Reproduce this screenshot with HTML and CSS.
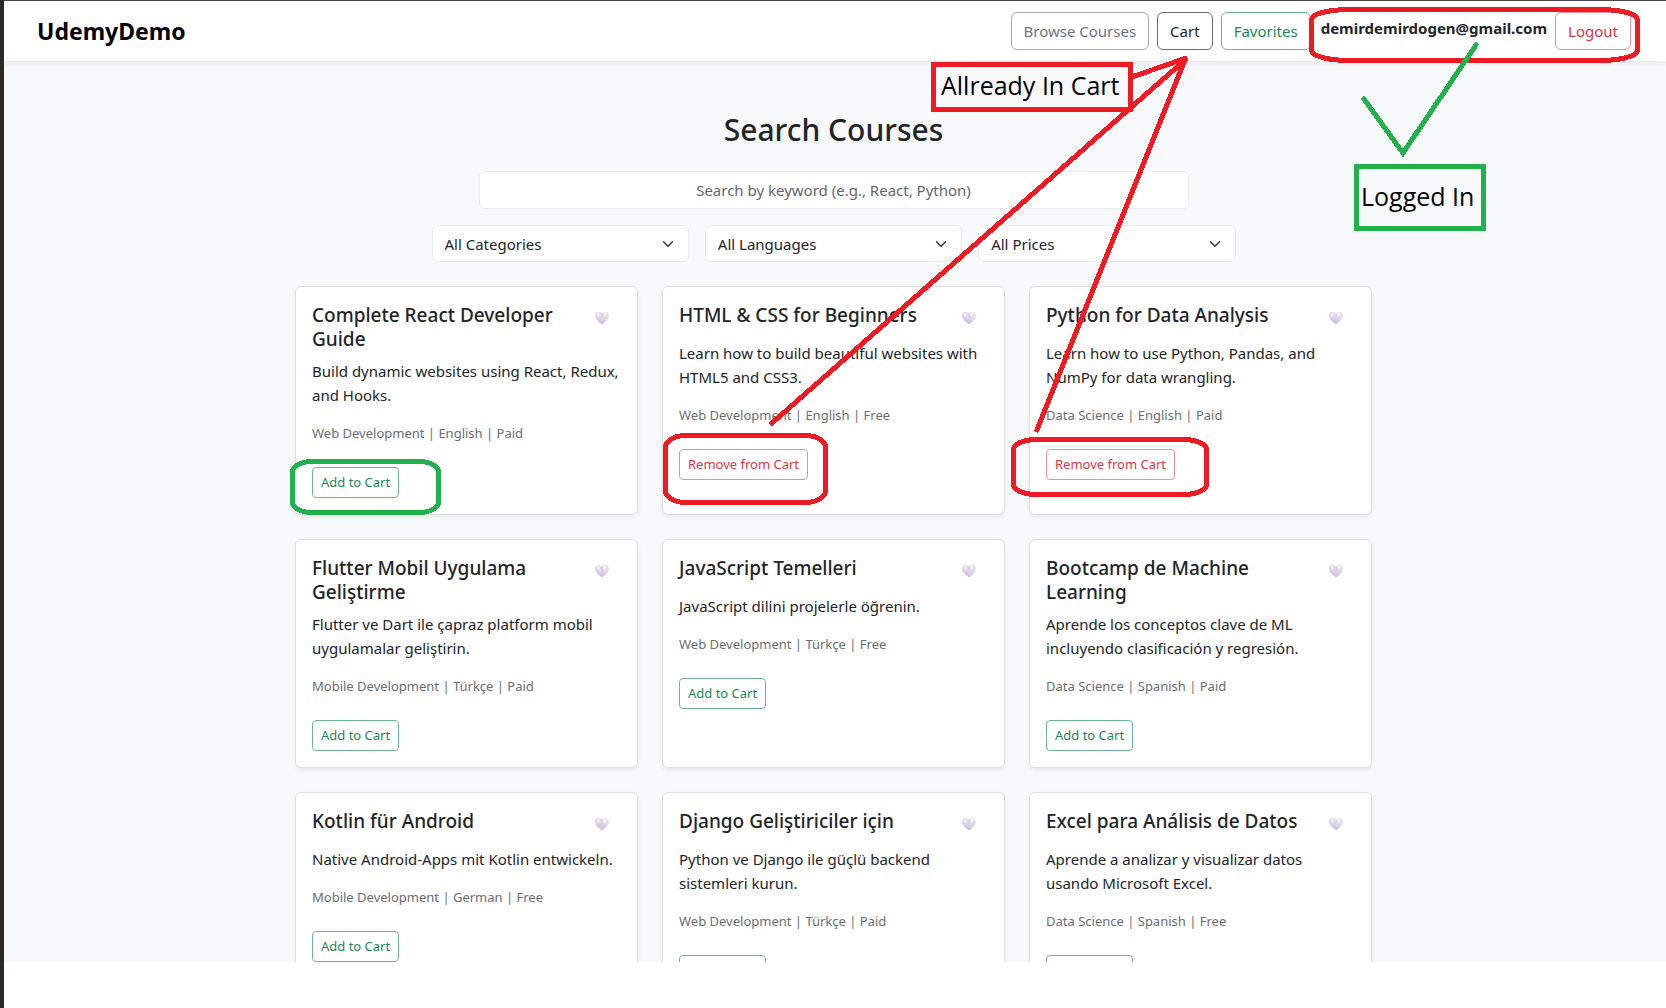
FILE: index.html
```html
<!DOCTYPE html>
<html lang="en">
<head>
<meta charset="utf-8">
<title>UdemyDemo</title>
<link rel="stylesheet" href="styles.css">
</head>
<body>
<svg class="symbols" aria-hidden="true">
  <defs>
    <linearGradient id="heart-fill" x1="0.7" y1="0" x2="0.3" y2="1">
      <stop offset="0" stop-color="#e9e6ea"/>
      <stop offset="0.5" stop-color="#dfd5e6"/>
      <stop offset="1" stop-color="#cdb0e6"/>
    </linearGradient>
    <symbol id="heart" viewBox="0 0 16 16">
      <path d="M8 14.5C6 13 1 9.500 1 5.500C1 3.200 2.600 1.800 4.500 1.800C6.200 1.800 7.400 2.600 8 3.200C8.600 2.600 9.800 1.800 11.500 1.800C13.400 1.800 15 3.200 15 5.500C15 9.500 10 13 8 14.500Z" fill="url(#heart-fill)"/>
      <ellipse cx="4.300" cy="5" rx="1.300" ry="2" fill="#fff" opacity="0.6"/>
      <ellipse cx="10.600" cy="4.600" rx="1.300" ry="1.900" fill="#fff" opacity="0.8"/>
      <path d="M8 3.500Q8.600 5 8 7.500" fill="none" stroke="#c3b6cc" stroke-width="0.600"/>
    </symbol>
  </defs>
</svg>
<div class="screen">
  <header class="navbar">
    <a class="brand" href="#">UdemyDemo</a>
    <nav class="nav-actions">
      <button class="btn btn-secondary">Browse Courses</button>
      <button class="btn btn-dark">Cart</button>
      <button class="btn btn-success">Favorites</button>
      <strong class="user-email">demirdemirdogen@gmail.com</strong>
      <button class="btn btn-danger">Logout</button>
    </nav>
  </header>
  <main class="content">
    <h1 class="page-title">Search Courses</h1>
    <input class="search" type="text" aria-label="Search courses" placeholder="Search by keyword (e.g., React, Python)">
    <div class="filters">
      <select class="filter" aria-label="Category"><option>All Categories</option></select>
      <select class="filter" aria-label="Language"><option>All Languages</option></select>
      <select class="filter" aria-label="Price"><option>All Prices</option></select>
    </div>
    <div class="courses">
      <article class="card">
        <div class="card-head"><h2 class="card-title">Complete React Developer Guide</h2><button class="like" aria-label="Favorite"><svg class="heart"><use href="#heart"/></svg></button></div>
        <p class="card-text">Build dynamic websites using React, Redux, and Hooks.</p>
        <p class="card-meta">Web Development | English | Paid</p>
        <button class="btn btn-small btn-success">Add to Cart</button>
      </article>
      <article class="card">
        <div class="card-head"><h2 class="card-title">HTML &amp; CSS for Beginners</h2><button class="like" aria-label="Favorite"><svg class="heart"><use href="#heart"/></svg></button></div>
        <p class="card-text">Learn how to build beautiful websites with HTML5 and CSS3.</p>
        <p class="card-meta">Web Development | English | Free</p>
        <button class="btn btn-small btn-danger">Remove from Cart</button>
      </article>
      <article class="card">
        <div class="card-head"><h2 class="card-title">Python for Data Analysis</h2><button class="like" aria-label="Favorite"><svg class="heart"><use href="#heart"/></svg></button></div>
        <p class="card-text">Learn how to use Python, Pandas, and NumPy for data wrangling.</p>
        <p class="card-meta">Data Science | English | Paid</p>
        <button class="btn btn-small btn-danger">Remove from Cart</button>
      </article>
      <article class="card">
        <div class="card-head"><h2 class="card-title">Flutter Mobil Uygulama Geliştirme</h2><button class="like" aria-label="Favorite"><svg class="heart"><use href="#heart"/></svg></button></div>
        <p class="card-text">Flutter ve Dart ile çapraz platform mobil uygulamalar geliştirin.</p>
        <p class="card-meta">Mobile Development | Türkçe | Paid</p>
        <button class="btn btn-small btn-success">Add to Cart</button>
      </article>
      <article class="card">
        <div class="card-head"><h2 class="card-title">JavaScript Temelleri</h2><button class="like" aria-label="Favorite"><svg class="heart"><use href="#heart"/></svg></button></div>
        <p class="card-text">JavaScript dilini projelerle öğrenin.</p>
        <p class="card-meta">Web Development | Türkçe | Free</p>
        <button class="btn btn-small btn-success">Add to Cart</button>
      </article>
      <article class="card">
        <div class="card-head"><h2 class="card-title">Bootcamp de Machine Learning</h2><button class="like" aria-label="Favorite"><svg class="heart"><use href="#heart"/></svg></button></div>
        <p class="card-text">Aprende los conceptos clave de ML incluyendo clasificación y regresión.</p>
        <p class="card-meta">Data Science | Spanish | Paid</p>
        <button class="btn btn-small btn-success">Add to Cart</button>
      </article>
      <article class="card">
        <div class="card-head"><h2 class="card-title">Kotlin für Android</h2><button class="like" aria-label="Favorite"><svg class="heart"><use href="#heart"/></svg></button></div>
        <p class="card-text">Native Android-Apps mit Kotlin entwickeln.</p>
        <p class="card-meta">Mobile Development | German | Free</p>
        <button class="btn btn-small btn-success">Add to Cart</button>
      </article>
      <article class="card">
        <div class="card-head"><h2 class="card-title">Django Geliştiriciler için</h2><button class="like" aria-label="Favorite"><svg class="heart"><use href="#heart"/></svg></button></div>
        <p class="card-text">Python ve Django ile güçlü backend sistemleri kurun.</p>
        <p class="card-meta">Web Development | Türkçe | Paid</p>
        <button class="btn btn-small btn-success">Add to Cart</button>
      </article>
      <article class="card">
        <div class="card-head"><h2 class="card-title">Excel para Análisis de Datos</h2><button class="like" aria-label="Favorite"><svg class="heart"><use href="#heart"/></svg></button></div>
        <p class="card-text">Aprende a analizar y visualizar datos usando Microsoft Excel.</p>
        <p class="card-meta">Data Science | Spanish | Free</p>
        <button class="btn btn-small btn-success">Add to Cart</button>
      </article>
    </div>
  </main>
</div>
<!-- Hand-drawn notes over the page -->
<svg class="notes" viewBox="0 0 1666 1008" width="1666" height="1008">
  <rect x="-1" y="501" width="4" height="8" fill="#fff" stroke="#000" stroke-width="2"/>
  <g class="ink ink-red">
    <rect x="933.500" y="64.500" width="197" height="45" />
    <path d="M1132 77L1185 58.500M1185 60L772 423M1185 60L1037 430"/>
    <rect x="1311.500" y="9.500" width="326" height="51" rx="38" ry="10"/>
    <rect x="665.500" y="435.500" width="160" height="67" rx="20" ry="12"/>
    <rect x="1013.500" y="439.500" width="193" height="55" rx="23" ry="10"/>
  </g>
  <g class="ink ink-green">
    <rect x="1356.500" y="166.500" width="127" height="62"/>
    <path d="M1364 99L1403 153L1476 45"/>
    <rect x="292.500" y="461.500" width="146" height="51" rx="20" ry="10"/>
  </g>
  <text class="note-text" x="941" y="95">Allready In Cart</text>
  <text class="note-text" x="1361" y="206">Logged In</text>
</svg>
</body>
</html>
```
FILE: styles.css
```css
* {
  box-sizing: border-box;
}

body {
  display: flex;
  flex-direction: column;
  height: 100vh;
  margin: 0;
  padding-bottom: 46px;
  overflow: hidden;
  position: relative;
  border-left: 4px solid #2b2826;
  background: #fff;
  color: #212529;
  font-family: "Noto Sans", sans-serif;
  font-size: 15px;
  line-height: 24px;
}

.symbols {
  position: absolute;
  width: 0;
  height: 0;
}

.screen {
  flex: 1;
  min-height: 0;
  overflow: hidden;
  border-top: 1px solid #4a4848;
  background: #f8f9fb;
}

.navbar {
  display: flex;
  align-items: center;
  justify-content: space-between;
  height: 60px;
  padding: 0 35px 0 33px;
  background: #fff;
  box-shadow: 0 2px 4px rgba(0, 0, 0, 0.08);
}

.brand {
  color: #000;
  font-size: 23px;
  font-weight: 700;
  text-decoration: none;
}

.nav-actions {
  display: flex;
  gap: 8px;
}

.user-email {
  padding-left: 2px;
}

.btn {
  padding: 6px 12px;
  border: 1px solid;
  border-radius: 6px;
  background: transparent;
  font: inherit;
  white-space: nowrap;
}

.user-email {
  padding-top: 4px;
}

.btn-secondary {
  border-color: #a3a9ae;
  color: #6c757d;
}

.btn-dark {
  border-color: #6b6e71;
  color: #212529;
}

.btn-success {
  border-color: #6cb594;
  color: #198754;
}

.btn-danger {
  border-color: #ec8e97;
  color: #dc3545;
}

.btn-small {
  padding: 4px 8px;
  border-radius: 4px;
  font-size: 13px;
  line-height: 21px;
}

.content {
  display: flex;
  flex-direction: column;
  align-items: center;
  padding: 50px 3px 0 0;
}

.page-title {
  margin: 0 0 22px;
  font-size: 30px;
  font-weight: 500;
  line-height: 38px;
}

.search {
  width: 100%;
  max-width: 710px;
  height: 38px;
  margin: 0 0 16px;
  padding: 6px 12px;
  border: 1px solid #e9ecef;
  border-radius: 6px;
  background: #fff;
  color: #212529;
  font: inherit;
  text-align: center;
}

.search::placeholder {
  color: #63686d;
  opacity: 1;
}

.filters {
  display: grid;
  grid-template-columns: repeat(3, 1fr);
  gap: 16px;
  width: 100%;
  max-width: 804px;
  margin-bottom: 24px;
}

.filter {
  height: 37px;
  padding: 6px 36px 6px 12px;
  border: 1px solid #e9ecef;
  border-radius: 6px;
  appearance: none;
  background: #fff url("data:image/svg+xml,%3csvg xmlns='http://www.w3.org/2000/svg' viewBox='0 0 16 16'%3e%3cpath fill='none' stroke='%23343a40' stroke-linecap='round' stroke-linejoin='round' stroke-width='2' d='m2 5 6 6 6-6'/%3e%3c/svg%3e") no-repeat right 14px center / 12px 12px;
  color: #212529;
  font: inherit;
}

.courses {
  display: grid;
  grid-template-columns: repeat(3, 1fr);
  gap: 24px;
  width: 100%;
  max-width: 1077px;
}

.card {
  padding: 16px;
  border: 1px solid #dee0e2;
  border-radius: 6px;
  background: #fff;
  box-shadow: 0 2px 4px rgba(0, 0, 0, 0.07);
}

.card-head {
  display: flex;
  align-items: flex-start;
  justify-content: space-between;
  margin-bottom: 8px;
}

.card-title {
  margin: 0;
  font-size: 19px;
  font-weight: 500;
  line-height: 24px;
}

.like {
  display: flex;
  flex: none;
  align-items: center;
  justify-content: center;
  width: 38px;
  height: 30px;
  padding: 0;
  border: 0;
  background: transparent;
}

.heart {
  width: 16px;
  height: 16px;
}

.card-text {
  margin: 0 0 16px;
}

.card-meta {
  margin: 0 0 24px;
  color: #6a6e72;
  font-size: 13px;
  line-height: 20px;
}

.notes {
  position: absolute;
  top: 0;
  left: -4px;
  pointer-events: none;
}

.ink {
  fill: none;
  stroke-width: 5;
  stroke-linecap: round;
  shape-rendering: crispEdges;
}

.ink-red {
  stroke: #ed1c24;
}

.ink-green {
  stroke: #22b14c;
}

.note-text {
  fill: #000;
  font-family: "Open Sans", sans-serif;
  font-size: 25px;
}
```
